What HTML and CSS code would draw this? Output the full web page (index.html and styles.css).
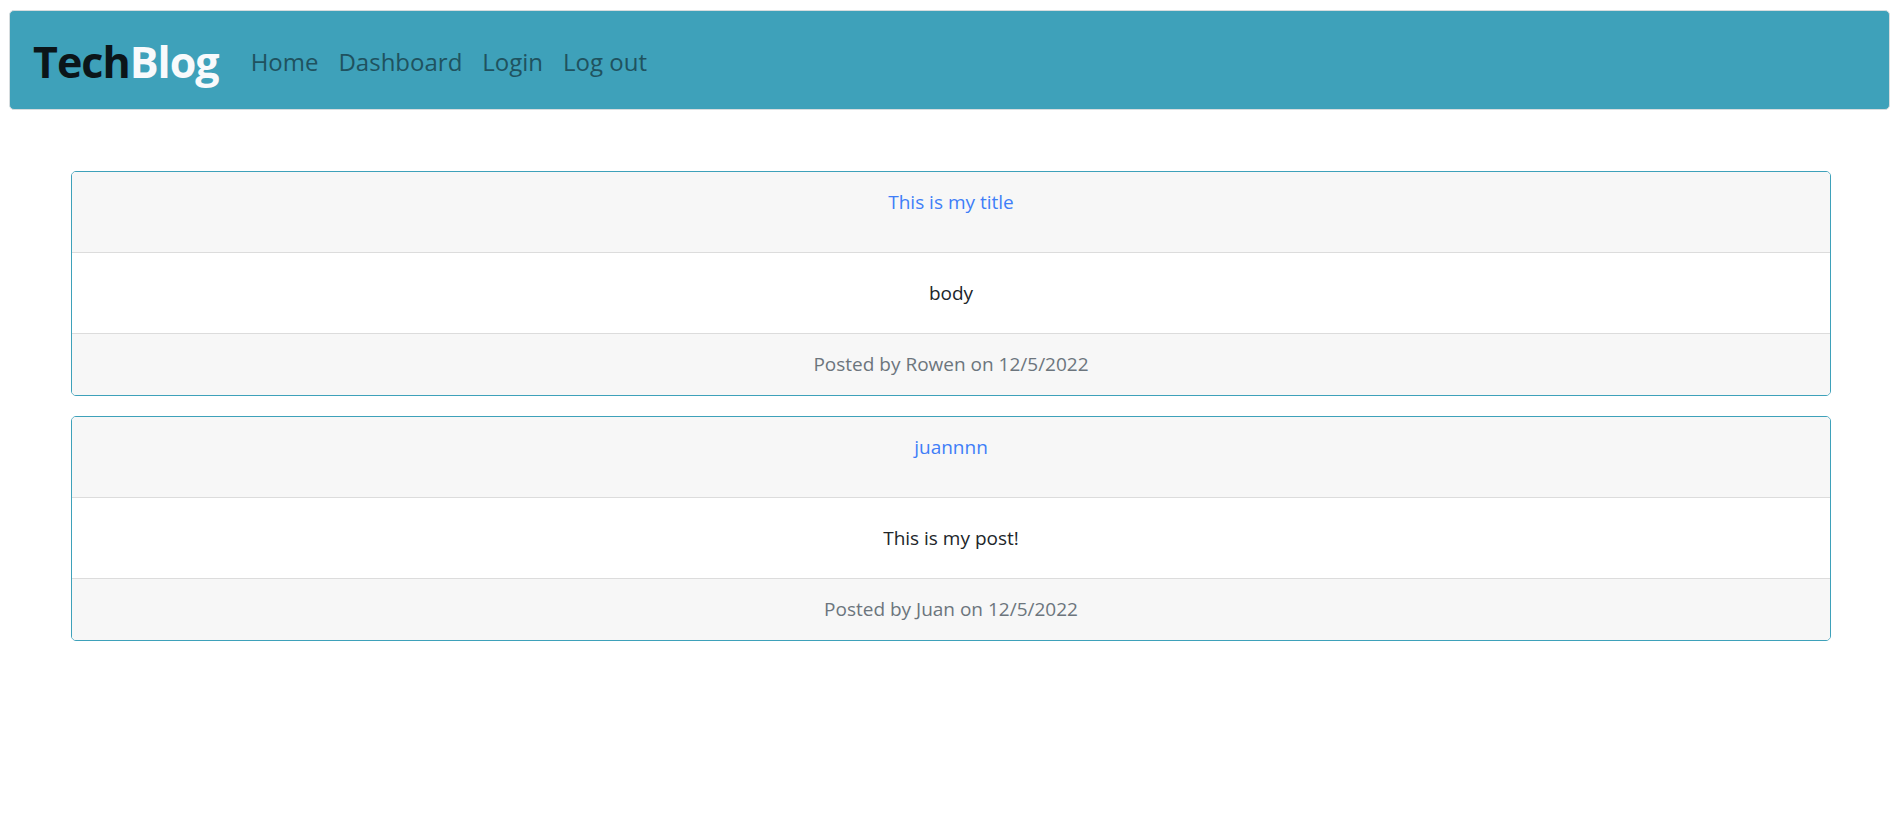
FILE: index.html
```html
<!DOCTYPE html>
<html lang="en">
<head>
<meta charset="utf-8">
<title>TechBlog</title>
<link rel="stylesheet" href="styles.css">
</head>
<body>
<nav class="navbar">
  <a class="brand" href="#"><span class="brand-dark">Tech</span><span class="brand-light">Blog</span></a>
  <ul class="nav-links">
    <li><a href="#">Home</a></li>
    <li><a href="#">Dashboard</a></li>
    <li><a href="#">Login</a></li>
    <li><a href="#">Log out</a></li>
  </ul>
</nav>
<main class="posts">
  <article class="card">
    <header class="card-header"><p class="card-title"><a href="#">This is my title</a></p></header>
    <div class="card-body"><p>body</p></div>
    <footer class="card-footer">Posted by Rowen on 12/5/2022</footer>
  </article>
  <article class="card">
    <header class="card-header"><p class="card-title"><a href="#">juannnn</a></p></header>
    <div class="card-body"><p>This is my post!</p></div>
    <footer class="card-footer">Posted by Juan on 12/5/2022</footer>
  </article>
</main>
</body>
</html>
```
FILE: styles.css
```css
* { box-sizing: border-box; }
body {
  margin: 0;
  font-family: "Open Sans", "Noto Sans", "Liberation Sans", sans-serif;
  font-size: 19px;
  line-height: 30px;
  color: #212529;
  background: #fff;
}
.navbar {
  margin: 10px 8px 0 9px;
  height: 100px;
  display: flex;
  align-items: center;
  padding: 4px 23px 0;
  background: #3ea1ba;
  border: 1px solid #d6dcde;
  border-radius: 5px;
}
.brand {
  text-decoration: none;
  font-size: 43px;
  font-weight: 700;
  letter-spacing: -1px;
  line-height: 50px;
  margin-right: 22px;
}
.brand-dark { color: #0b1519; }
.brand-light { color: #f8fafc; }
.nav-links {
  list-style: none;
  display: flex;
  margin: 0;
  padding: 0;
  gap: 0;
}
.nav-links a {
  display: block;
  padding: 0 10px;
  font-size: 24px;
  line-height: 36px;
  color: #1f525f;
  text-decoration: none;
}
.posts {
  margin: 61px 0 0 71px;
  width: 1760px;
}
.card {
  border: 1px solid #3ea1ba;
  border-radius: 5px;
  margin-bottom: 20px;
  overflow: hidden;
  text-align: center;
}
.card-header {
  background: #f7f7f7;
  padding: 15px 25px;
  border-bottom: 1px solid #dcdcdc;
}
.card-title {
  margin: 0 0 20px;
}
.card-title a {
  color: #3f7ef8;
  text-decoration: none;
}
.card-body {
  padding: 25px;
}
.card-body p { margin: 0; }
.card-footer {
  background: #f7f7f7;
  padding: 15px 25px 16px;
  border-top: 1px solid #dcdcdc;
  color: #6c757d;
}
```
